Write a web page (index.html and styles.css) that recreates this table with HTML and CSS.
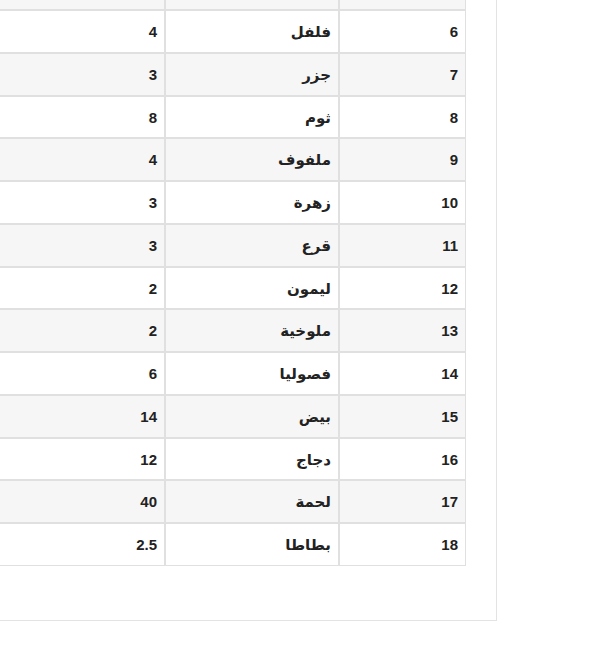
FILE: index.html
```html
<!DOCTYPE html>
<html lang="ar" dir="rtl">
<head>
<meta charset="utf-8">
<title>الأسعار</title>
<link rel="stylesheet" href="styles.css">
</head>
<body>
<div class="page">
  <div class="panel">
    <table class="prices">
      <tbody>
        <tr class="lead"><td class="c-num"></td><td class="c-name"></td><td class="c-price"></td></tr>
        <tr><td class="c-num">6</td><td class="c-name">فلفل</td><td class="c-price">4</td></tr>
        <tr><td class="c-num">7</td><td class="c-name">جزر</td><td class="c-price">3</td></tr>
        <tr><td class="c-num">8</td><td class="c-name">ثوم</td><td class="c-price">8</td></tr>
        <tr><td class="c-num">9</td><td class="c-name">ملفوف</td><td class="c-price">4</td></tr>
        <tr><td class="c-num">10</td><td class="c-name">زهرة</td><td class="c-price">3</td></tr>
        <tr><td class="c-num">11</td><td class="c-name">قرع</td><td class="c-price">3</td></tr>
        <tr><td class="c-num">12</td><td class="c-name">ليمون</td><td class="c-price">2</td></tr>
        <tr><td class="c-num">13</td><td class="c-name">ملوخية</td><td class="c-price">2</td></tr>
        <tr><td class="c-num">14</td><td class="c-name">فصوليا</td><td class="c-price">6</td></tr>
        <tr><td class="c-num">15</td><td class="c-name">بيض</td><td class="c-price">14</td></tr>
        <tr><td class="c-num">16</td><td class="c-name">دجاج</td><td class="c-price">12</td></tr>
        <tr><td class="c-num">17</td><td class="c-name">لحمة</td><td class="c-price">40</td></tr>
        <tr><td class="c-num">18</td><td class="c-name">بطاطا</td><td class="c-price">2.5</td></tr>
      </tbody>
    </table>
  </div>
</div>
</body>
</html>
```
FILE: styles.css
```css
html, body {
  margin: 0;
  padding: 0;
  background: #ffffff;
}
body {
  font-family: "Liberation Sans", "DejaVu Sans", Arial, sans-serif;
  color: #222222;
  overflow: hidden;
}
.page {
  overflow: hidden;
  padding-right: 99px;
  margin-top: -12px;
}
.panel {
  width: 700px;
  border: 1px solid #e3e3e3;
  border-top: none;
  padding: 0 30px 54px 0;
  background: #ffffff;
}
.prices {
  border-collapse: separate;
  border-spacing: 0;
  width: 100%;
}
.prices td {
  border: 1px solid #e0e0e0;
  padding: 11px 7px 9px;
  font-size: 15px;
  line-height: 20.75px;
  font-weight: bold;
  text-align: right;
  vertical-align: middle;
}
.prices tr.lead td {
  height: 0;
  padding: 10px 7px;
  line-height: 0;
  font-size: 0;
}
.prices tr:nth-child(odd) td {
  background: #f6f6f6;
}
.c-num {
  width: 111px;
}
.c-name {
  width: 158px;
}
```
